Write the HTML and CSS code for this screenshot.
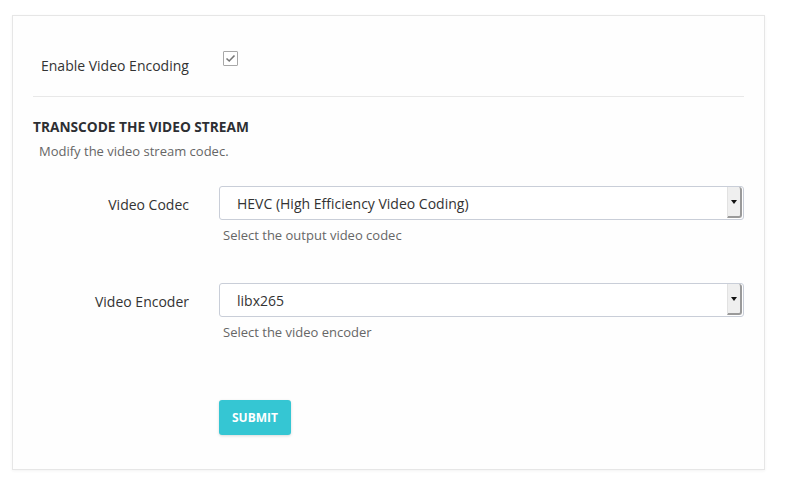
FILE: index.html
```html
<!DOCTYPE html>
<html>
<head>
<meta charset="utf-8">
<link rel="stylesheet" href="styles.css">
</head>
<body>
<div class="card">
  <div class="enable-row">
    <span class="enable-label">Enable Video Encoding</span>
    <span class="checkbox">
      <svg width="11" height="9" viewBox="0 0 11 9"><path d="M1.5 4.5 L4.2 7 L9.5 1.5" fill="none" stroke="#777" stroke-width="1.6"/></svg>
    </span>
  </div>
  <div class="divider"></div>
  <h2 class="section-title">TRANSCODE THE VIDEO STREAM</h2>
  <p class="section-desc">Modify the video stream codec.</p>

  <div class="field first">
    <div class="field-row">
      <label class="field-label">Video Codec</label>
      <div class="select">
        <span class="select-value">HEVC (High Efficiency Video Coding)</span>
        <span class="select-btn"><span class="tri"></span></span>
      </div>
    </div>
    <div class="help">Select the output video codec</div>
  </div>

  <div class="field second">
    <div class="field-row">
      <label class="field-label">Video Encoder</label>
      <div class="select">
        <span class="select-value">libx265</span>
        <span class="select-btn"><span class="tri"></span></span>
      </div>
    </div>
    <div class="help">Select the video encoder</div>
  </div>

  <div class="actions">
    <button class="submit">SUBMIT</button>
  </div>
</div>
</body>
</html>
```

FILE: styles.css
```css
html, body {
  margin: 0;
  padding: 0;
  background: #ffffff;
}
body {
  padding: 15px 30px 15px 12px;
  font-family: "Open Sans", "Liberation Sans", sans-serif;
  color: #333;
}
.card {
  border: 1px solid #e6e6e6;
  box-shadow: 0 1px 3px rgba(0, 0, 0, 0.05);
  background: #fefefe;
  padding: 0 20px 34px 20px;
}
.enable-row {
  display: flex;
  align-items: flex-start;
  padding-top: 35px;
  padding-bottom: 20px;
}
.enable-label {
  margin-left: 8px;
  margin-top: 5px;
  width: 182px;
  font-size: 14px;
  line-height: 20px;
  color: #333;
}
.checkbox {
  width: 13px;
  height: 13px;
  border: 1px solid #a8a8a8;
  border-radius: 1px;
  background: #fff;
  display: flex;
  align-items: center;
  justify-content: center;
}
.divider {
  height: 1px;
  background: #e8e8e8;
}
.section-title {
  margin: 20px 0 0 0;
  font-size: 13.7px;
  font-weight: 700;
  line-height: 20px;
  color: #2d2f33;
}
.section-desc {
  margin: 5px 0 0 6px;
  font-size: 13px;
  line-height: 18px;
  color: #666;
}
.field.first {
  margin-top: 26px;
}
.field.second {
  margin-top: 39px;
}
.field-row {
  display: flex;
  align-items: center;
}
.field-label {
  width: 156px;
  margin-right: 30px;
  text-align: right;
  font-size: 14px;
  line-height: 20px;
  color: #333;
  padding-top: 3px;
}
.select {
  flex: 1;
  height: 32px;
  border: 1px solid #c9ced8;
  border-radius: 3px;
  display: flex;
  align-items: center;
  justify-content: space-between;
  background: #fff;
}
.select-value {
  padding-left: 17px;
  font-size: 14px;
  color: #333;
}
.select-btn {
  width: 12px;
  height: 29px;
  margin-right: 1px;
  background: #efefef;
  border-left: 1px solid #e2e2e2;
  border-right: 2px solid #9a9a9a;
  border-bottom: 2px solid #9a9a9a;
  border-radius: 0 3px 3px 0;
  display: flex;
  align-items: center;
  justify-content: center;
  align-self: flex-start;
}
.tri {
  width: 0;
  height: 0;
  border-left: 3px solid transparent;
  border-right: 3px solid transparent;
  border-top: 4px solid #111;
}
.help {
  margin: 6px 0 0 190px;
  font-size: 13px;
  line-height: 18px;
  color: #666;
}
.actions {
  margin-top: 59px;
  padding-left: 186px;
}
.submit {
  width: 72px;
  height: 35px;
  border: none;
  border-radius: 3px;
  background: #35c6d3;
  color: #fff;
  font-family: "Open Sans", "Liberation Sans", sans-serif;
  font-size: 12px;
  font-weight: 700;
  box-shadow: 0 1px 3px rgba(0, 0, 0, 0.15);
  padding: 0;
}
```
